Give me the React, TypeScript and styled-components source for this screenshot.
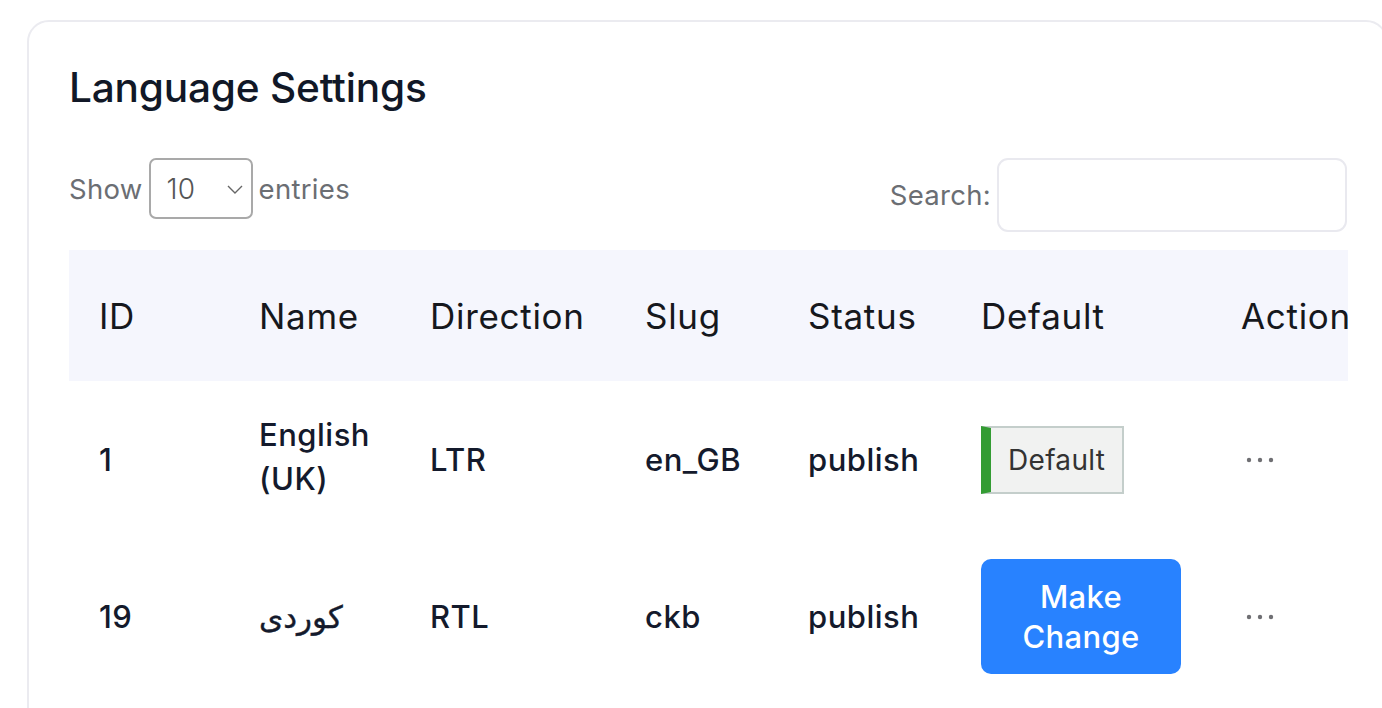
import React from 'react'
import styled, { createGlobalStyle } from 'styled-components'

const GlobalStyle = createGlobalStyle`
  html, body {
    margin: 0;
    padding: 0;
    overflow: hidden;
    background: #ffffff;
    font-family: Inter, 'Noto Sans', 'DejaVu Sans', sans-serif;
  }
`

const Page = styled.div`
  padding: 20px 0 0 27px;
  width: 1400px;
`

const Card = styled.section`
  width: 1361px;
  box-sizing: border-box;
  border: 2px solid #ebebf0;
  border-radius: 22px;
  padding: 42px 39px 60px 40px;
  background: #fff;
`

const Title = styled.h2`
  margin: 0 0 46px;
  font-size: 40.6px;
  line-height: 48px;
  font-weight: 500;
  color: #111827;
  letter-spacing: -0.2px;
`

const Toolbar = styled.div`
  display: flex;
  justify-content: space-between;
  align-items: flex-start;
  margin-bottom: 18px;
`

const ControlGroup = styled.label<{ centered?: boolean }>`
  display: flex;
  align-items: ${({ centered }) => (centered ? 'center' : 'flex-start')};
  gap: 6px;
  font-size: 27.5px;
  color: #6b6e73;
  font-weight: 400;
  letter-spacing: 0.3px;
`

const LabelText = styled.span`
  line-height: 62px;
`

const SelectBox = styled.div`
  position: relative;
  width: 104px;
  height: 61px;
  box-sizing: border-box;
  border: 2px solid #a9a9a9;
  border-radius: 7px;
  display: flex;
  align-items: center;
  padding-left: 16px;
  font-size: 28px;
  color: #555;
  font-weight: 300;
  letter-spacing: 0;
`

const Chevron = styled.svg`
  position: absolute;
  right: 7px;
  top: 50%;
  transform: translateY(-50%);
`

const SearchInput = styled.input`
  width: 350px;
  height: 74px;
  box-sizing: border-box;
  border: 2px solid #e9e9ef;
  border-radius: 11px;
  outline: none;
  font-size: 28px;
  padding: 0 16px;
`

const TableWrap = styled.div`
  width: 1279px;
  overflow: hidden;
`

const Table = styled.table`
  width: 1342px;
  table-layout: fixed;
  border-collapse: collapse;
`

const HeadRow = styled.tr`
  background: #f5f6fd;
`

const Th = styled.th`
  text-align: left;
  font-size: 35px;
  font-weight: 400;
  color: #16181d;
  line-height: 44px;
  letter-spacing: 0.7px;
  padding: 44px 0 43px 30px;
  white-space: nowrap;
`

const Td = styled.td`
  font-size: 31px;
  font-weight: 500;
  color: #141a2c;
  line-height: 44px;
  letter-spacing: 0.5px;
  height: 115px;
  padding: 21px 30px 21px 30px;
  vertical-align: middle;
`

const NameText = styled.span`
  display: block;
  margin-top: -5px;
`

const DefaultBadge = styled.span`
  display: inline-flex;
  align-items: center;
  box-sizing: border-box;
  height: 68px;
  padding: 0 17px 0 17px;
  background: #f1f2f1;
  border: 2px solid #c4cecb;
  border-left: 10px solid #339c33;
  font-size: 28px;
  font-weight: 400;
  color: #333;
  letter-spacing: 0.3px;
`

const ChangeButton = styled.button`
  width: 200px;
  height: 115px;
  border: none;
  border-radius: 10px;
  background: #2882ff;
  color: #fff;
  font-family: inherit;
  font-size: 31px;
  font-weight: 500;
  line-height: 40px;
  letter-spacing: 0.3px;
  padding: 0 20px;
  cursor: pointer;
`

const Dots = styled.svg`
  display: block;
  margin-left: 4px;
`

const Arabic = styled.span`
  font-family: 'DejaVu Sans', 'Noto Sans', sans-serif;
  font-size: 31px;
  font-weight: 400;
  letter-spacing: 0;
  -webkit-text-stroke: 0.4px #141a2c;
`

type Row = {
  id: number
  name: React.ReactNode
  direction: string
  slug: string
  status: string
  isDefault: boolean
}

const rows: Row[] = [
  { id: 1, name: <NameText>English (UK)</NameText>, direction: 'LTR', slug: 'en_GB', status: 'publish', isDefault: true },
  { id: 19, name: <Arabic dir="rtl">کوردی</Arabic>, direction: 'RTL', slug: 'ckb', status: 'publish', isDefault: false },
]

const widths = [160, 171, 215, 163, 173, 260, 200]

function MoreIcon() {
  return (
    <Dots width="30" height="8" viewBox="0 0 30 8">
      <circle cx="4" cy="4" r="2.2" fill="#6f6f73" />
      <circle cx="15" cy="4" r="2.2" fill="#6f6f73" />
      <circle cx="26" cy="4" r="2.2" fill="#6f6f73" />
    </Dots>
  )
}

export default function App() {
  return (
    <Page>
      <GlobalStyle />
      <Card>
        <Title>Language Settings</Title>
        <Toolbar>
          <ControlGroup>
            <LabelText>Show</LabelText>
            <SelectBox>
              10
              <Chevron width="18" height="12" viewBox="0 0 18 12">
                <path d="M2 3l7 7 7-7" stroke="#666" strokeWidth="1.4" fill="none" />
              </Chevron>
            </SelectBox>
            <LabelText>entries</LabelText>
          </ControlGroup>
          <ControlGroup centered>
            <span>Search:</span>
            <SearchInput type="search" />
          </ControlGroup>
        </Toolbar>
        <TableWrap>
          <Table>
            <colgroup>
              {widths.map((w, i) => (
                <col key={i} style={{ width: w }} />
              ))}
            </colgroup>
            <thead>
              <HeadRow>
                <Th>ID</Th>
                <Th>Name</Th>
                <Th>Direction</Th>
                <Th>Slug</Th>
                <Th>Status</Th>
                <Th>Default</Th>
                <Th>Action</Th>
              </HeadRow>
            </thead>
            <tbody>
              {rows.map((r) => (
                <tr key={r.id}>
                  <Td>{r.id}</Td>
                  <Td>{r.name}</Td>
                  <Td>{r.direction}</Td>
                  <Td>{r.slug}</Td>
                  <Td>{r.status}</Td>
                  <Td>
                    {r.isDefault ? <DefaultBadge>Default</DefaultBadge> : <ChangeButton>Make Change</ChangeButton>}
                  </Td>
                  <Td>
                    <MoreIcon />
                  </Td>
                </tr>
              ))}
            </tbody>
          </Table>
        </TableWrap>
      </Card>
    </Page>
  )
}
